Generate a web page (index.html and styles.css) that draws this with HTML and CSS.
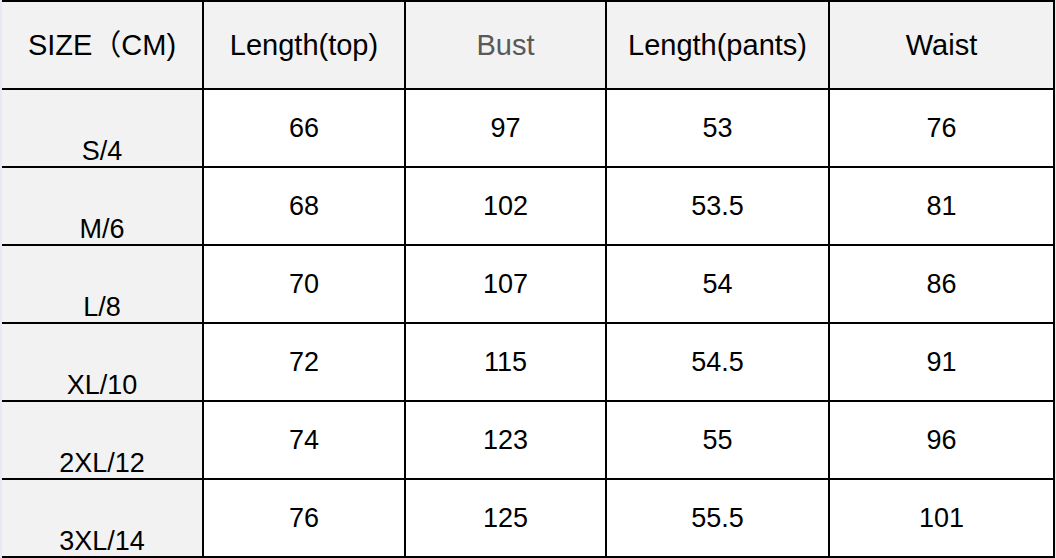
FILE: index.html
```html
<!DOCTYPE html>
<html lang="en">
<head>
<meta charset="utf-8">
<title>Size chart</title>
<link rel="stylesheet" href="styles.css">
</head>
<body>
<div class="chart">
  <div class="cell head">SIZE（CM)</div>
  <div class="cell head">Length(top)</div>
  <div class="cell head muted">Bust</div>
  <div class="cell head">Length(pants)</div>
  <div class="cell head">Waist</div>

  <div class="cell size">S/4</div>
  <div class="cell">66</div>
  <div class="cell">97</div>
  <div class="cell">53</div>
  <div class="cell">76</div>

  <div class="cell size">M/6</div>
  <div class="cell">68</div>
  <div class="cell">102</div>
  <div class="cell">53.5</div>
  <div class="cell">81</div>

  <div class="cell size">L/8</div>
  <div class="cell">70</div>
  <div class="cell">107</div>
  <div class="cell">54</div>
  <div class="cell">86</div>

  <div class="cell size">XL/10</div>
  <div class="cell">72</div>
  <div class="cell">115</div>
  <div class="cell">54.5</div>
  <div class="cell">91</div>

  <div class="cell size">2XL/12</div>
  <div class="cell">74</div>
  <div class="cell">123</div>
  <div class="cell">55</div>
  <div class="cell">96</div>

  <div class="cell size">3XL/14</div>
  <div class="cell">76</div>
  <div class="cell">125</div>
  <div class="cell">55.5</div>
  <div class="cell">101</div>
</div>
</body>
</html>
```
FILE: styles.css
```css
html, body {
  margin: 0;
  padding: 0;
}
body {
  background: #e8e8f0;
  font-family: "Liberation Sans", Arial, "Noto Sans CJK SC", sans-serif;
  color: #000;
}
.chart {
  margin-left: 2px;
  width: 1053px;
  box-sizing: border-box;
  display: grid;
  grid-template-columns: 200px 200px 199px 221px 223px;
  grid-template-rows: 86px repeat(6, 76px);
  gap: 2px;
  padding: 2px 2px 2px 0;
  background: #000;
}
.cell {
  background: #fff;
  display: flex;
  align-items: center;
  justify-content: center;
  font-size: 27px;
  line-height: 30px;
}
.head {
  background: #f2f2f2;
  font-size: 29px;
  line-height: 32px;
}
.muted {
  color: #595959;
}
.size {
  background: #f2f2f2;
  align-items: flex-end;
}
```
